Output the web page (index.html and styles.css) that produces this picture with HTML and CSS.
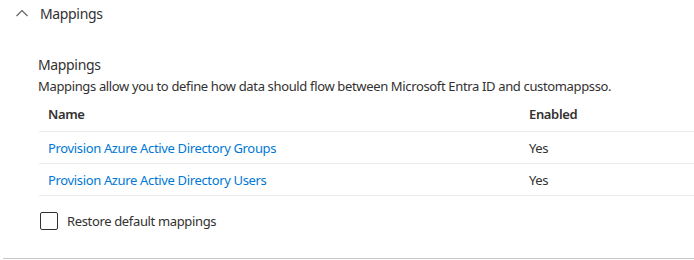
FILE: index.html
```html
<!DOCTYPE html>
<html lang="en">
<head>
  <meta charset="UTF-8">
  <title>Mappings</title>
  <link rel="stylesheet" href="styles.css">
</head>
<body>

<div class="section">
  <!-- Collapsible header -->
  <div class="section-header">
    <svg class="chevron" width="12" height="8" viewBox="0 0 12 8">
      <path d="M0.5 7 L6 1.5 L11.5 7" fill="none" stroke="#605e5c" stroke-width="1.1"/>
    </svg>
    <span>Mappings</span>
  </div>

  <div class="section-body">
    <div class="title">Mappings</div>
    <div class="desc">Mappings allow you to define how data should flow between Microsoft Entra ID and customappsso.</div>

    <table class="grid">
      <thead>
        <tr>
          <th class="col-name">Name</th>
          <th>Enabled</th>
        </tr>
      </thead>
      <tbody>
        <tr>
          <td class="col-name"><a href="#">Provision Azure Active Directory Groups</a></td>
          <td>Yes</td>
        </tr>
        <tr>
          <td class="col-name"><a href="#">Provision Azure Active Directory Users</a></td>
          <td>Yes</td>
        </tr>
      </tbody>
    </table>

    <label class="check">
      <span class="box"></span>
      Restore default mappings
    </label>
  </div>
</div>

</body>
</html>
```

FILE: styles.css
```css
body {
  margin: 0;
  padding: 0;
  font-family: "Noto Sans", "Open Sans", sans-serif;
  letter-spacing: -0.35px;
  color: #323130;
  background: #ffffff;
  overflow: hidden;
}
.section {
  margin-left: 3px;
  border-bottom: 1px solid #c8c6c4;
  height: 259px;
  box-sizing: border-box;
}
.section-header {
  display: flex;
  align-items: center;
  height: 26px;
  font-size: 14px;
}
.chevron {
  margin-left: 13px;
  margin-right: 12px;
}
.section-body {
  padding-left: 35px;
  padding-top: 29px;
}
.title {
  font-size: 14px;
  line-height: 20px;
}
.desc {
  font-size: 13px;
  line-height: 22px;
  white-space: nowrap;
}
.grid {
  width: calc(100% + 6px);
  border-collapse: collapse;
  margin-left: 1px;
  font-size: 13px;
}
.grid th {
  text-align: left;
  font-weight: 600;
  height: 34px;
  padding: 0 0 0 9px;
  border-bottom: 1px solid #edebe9;
}
.grid td {
  height: 31px;
  padding: 0 0 0 9px;
  border-bottom: 1px solid #edebe9;
}
.grid .col-name {
  width: 472px;
}
.grid a {
  color: #0078d4;
  text-decoration: none;
}
.check {
  display: flex;
  align-items: center;
  gap: 9px;
  margin-top: 16px;
  margin-left: 2px;
  font-size: 13px;
}
.box {
  width: 16px;
  height: 16px;
  border: 1px solid #323130;
  border-radius: 2px;
}
```
